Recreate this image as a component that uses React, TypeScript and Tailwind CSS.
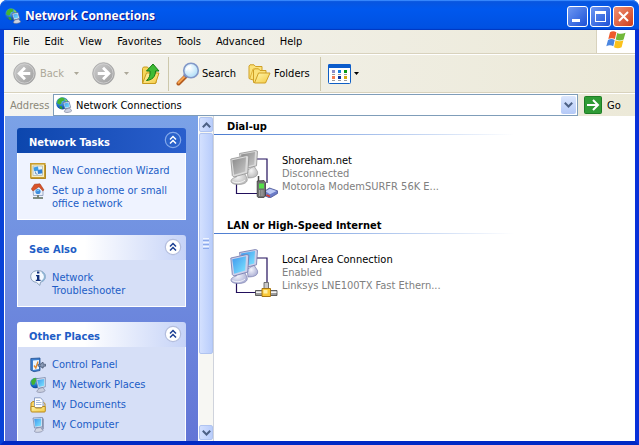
import type { ReactNode } from "react";
import { clsx } from "clsx";

const menuItems = ["File", "Edit", "View", "Favorites", "Tools", "Advanced", "Help"];

/* ---------- icons ---------- */

const GradientDefs = () => (
  <svg aria-hidden="true" className="absolute size-0">
    <defs>
      <linearGradient id="screen" x1="0" x2="1" y1="0" y2="1">
        <stop offset="0" stopColor="#3f97ee" />
        <stop offset="1" stopColor="#7fe6ff" />
      </linearGradient>
      <linearGradient id="screenOff" x1="0" x2="1" y1="0" y2="1">
        <stop offset="0" stopColor="#8a8a8a" />
        <stop offset="1" stopColor="#c8c8c8" />
      </linearGradient>
      <radialGradient cx="0.4" cy="0.3" id="globe" r="0.8">
        <stop offset="0" stopColor="#6fc4f5" />
        <stop offset="0.6" stopColor="#1668c4" />
        <stop offset="1" stopColor="#0b3a86" />
      </radialGradient>
      <linearGradient id="navDisc" x1="0" x2="1" y1="0" y2="1">
        <stop offset="0" stopColor="#cfcfcf" />
        <stop offset="1" stopColor="#9c9c9c" />
      </linearGradient>
      <radialGradient cx="0.4" cy="0.35" id="lens" r="0.7">
        <stop offset="0" stopColor="#ffffff" />
        <stop offset="1" stopColor="#a9dcf8" />
      </radialGradient>
      <linearGradient id="folder" x1="0" x2="1" y1="0" y2="1">
        <stop offset="0" stopColor="#fff7b0" />
        <stop offset="1" stopColor="#f4c93f" />
      </linearGradient>
      <radialGradient cx="0.4" cy="0.4" id="standOff" r="0.7">
        <stop offset="0" stopColor="#f4f4f4" />
        <stop offset="1" stopColor="#b4b4b4" />
      </radialGradient>
      <radialGradient cx="0.4" cy="0.4" id="stand" r="0.7">
        <stop offset="0" stopColor="#f3f4fc" />
        <stop offset="1" stopColor="#a3a7cf" />
      </radialGradient>
    </defs>
  </svg>
);

const NetworkGlobeIcon = () => (
  <svg aria-hidden="true" className="size-4 shrink-0" viewBox="0 0 16 16">
    <circle cx="6.4" cy="6.4" fill="url(#globe)" r="6.200" />
    <path d="M2 2.600 5 .6 8.400 1 8 3.400 5.800 4.400 5 7 3 7.400 1 6Z" fill="#46b52f" />
    <path d="M8.500 1.200 11.600 3.600 11 5 9 4Z" fill="#7ad557" />
    <path d="M3.400 8.800 6 9.400 6.400 12.100 4 11.400Z" fill="#37a12a" />
    <path d="m7 5.600 6-1.200 1.600 6L9 12Z" fill="#e8ecf6" stroke="#5c6c94" strokeWidth=".7" />
    <path d="m8 6.400 4.400-.9 1.100 4.200-4 1Z" fill="url(#screen)" />
    <path d="m9.500 12.200 4-1.200 2.200 2.600c0 1.800-6.600 2.600-7.400 1Z" fill="#cdd2e2" stroke="#69718d" strokeWidth=".6" />
  </svg>
);

const NavIcon = ({ forward = false }: { forward?: boolean }) => (
  <svg aria-hidden="true" className="size-[23px] shrink-0" viewBox="0 0 24 24">
    <circle cx="12" cy="12" fill="url(#navDisc)" r="11.300" stroke="#a3a3a3" strokeWidth=".8" />
    <circle cx="12" cy="12" fill="none" r="10" stroke="#d4d4d4" strokeWidth=".8" />
    <path
      d={forward ? "M6 12h11M11.500 6l6 6-6 6" : "M18 12H7M12.500 6l-6 6 6 6"}
      fill="none"
      stroke="#fff"
      strokeWidth="3"
    />
  </svg>
);

const CaretIcon = ({ className }: { className?: string }) => (
  <svg aria-hidden="true" className={clsx("h-[3px] w-[5px] shrink-0", className)} viewBox="0 0 5 3">
    <path d="M0 0h5L2.500 3Z" fill="currentColor" />
  </svg>
);

const UpFolderIcon = () => (
  <svg aria-hidden="true" className="h-6 w-5 shrink-0" viewBox="0 0 20 24">
    <path d="M1.500 21V6.500l1-1.500h4l1.500 2h7V21Z" fill="#f6d65c" stroke="#c79a1e" />
    <path d="M1.500 21.500 5.500 11H18l-3.500 10.500Z" fill="url(#folder)" stroke="#c79a1e" />
    <path
      d="M12 2 5.500 9H9c.4 4.500-.6 7-3.500 9.500C11 18 14.500 15 14.500 9H18Z"
      fill="#3fbb35"
      stroke="#167a14"
    />
  </svg>
);

const SearchIcon = () => (
  <svg aria-hidden="true" className="size-6 shrink-0" viewBox="0 0 24 24">
    <path d="m2.500 21.500 8-8" stroke="#b25a1c" strokeLinecap="round" strokeWidth="4" />
    <path d="m2.500 20.800 7.500-7.500" stroke="#f7a552" strokeLinecap="round" strokeWidth="2" />
    <path d="m8.500 14.500 2-2" stroke="#6d7eb0" strokeWidth="4" />
    <circle cx="15" cy="8.500" fill="url(#lens)" r="7.300" stroke="#8298c8" strokeWidth="1.600" />
    <path d="M10.500 8.500c.3-2.500 2-4 4.500-4.200" fill="none" stroke="#fff" strokeWidth="1.500" />
  </svg>
);

const FoldersIcon = () => (
  <svg aria-hidden="true" className="h-5 w-[23px] shrink-0" viewBox="0 0 23 20">
    <path d="M1 14.500V2L2 .8h4L7.500 2.500H14V6L5 16Z" fill="#fbe27a" stroke="#cf9f24" />
    <path d="M5.500 18.500V6l1-1.200h4L12 6.500h6V9L8 18.500Z" fill="#fbe27a" stroke="#cf9f24" />
    <path d="M2 14 5 5h2" fill="none" stroke="#e1b53c" />
    <path d="m6.500 19 4-10H22l-4.500 10Z" fill="url(#folder)" stroke="#cf9f24" />
  </svg>
);

const ViewsIcon = () => (
  <svg aria-hidden="true" className="h-5 w-[23px] shrink-0" viewBox="0 0 23 20">
    <rect fill="#fff" height="19" rx="1" stroke="#0f5fc4" width="22" x=".5" y=".5" />
    <path d="M0 1.500Q0 0 1.500 0h20Q23 0 23 1.500V4H0Z" fill="#0b5ccb" />
    <path d="M4 6h3v3H4Z" fill="#8f8fc9" />
    <path d="M10 6h3v3h-3Z" fill="#1a7fe0" />
    <path d="M16 6h3v3h-3Z" fill="#0a9a18" />
    <path d="M4 12h3v3H4Z" fill="#f57c50" />
    <path d="M10 12h3v3h-3Z" fill="#12349a" />
    <path d="M16 12h3v3h-3Z" fill="#d3a80e" />
    <path d="M4 10.500h3m3 0h3m3 0h3M4 16.500h3m3 0h3m3 0h3" stroke="#9a9a9a" />
  </svg>
);

const WindowsFlagIcon = () => (
  <svg aria-hidden="true" className="h-[18px] w-5" viewBox="0 0 20 18">
    <path d="M4 1.300C6 0 8.200 0 10.400 1.300L8.900 8C6.900 6.900 4.700 6.900 2.300 8Z" fill="#ee5a2b" />
    <path d="M11.200 1.900c2.400 1.300 5 1.300 8.300-.2L17.600 8.400c-2.400 1.300-5.200 1.300-7.900 0Z" fill="#72b83a" />
    <path d="M2 8.900c2.300-1.200 4.500-1.200 6.700 0L7.300 15.200c-2.100-1.200-4.600-1.200-7 0Z" fill="#4a86e0" />
    <path d="M9.500 9.300c2.600 1.300 5.300 1.300 7.900 0l-1.800 6.900c-2.500 1.300-5 1.300-7.600 0Z" fill="#fbc11c" />
  </svg>
);

const ChevronIcon = ({ up = false }: { up?: boolean }) => (
  <svg aria-hidden="true" className="h-[6px] w-[9px]" viewBox="0 0 9 6">
    <path d={up ? "M.8 5.200 4.500 1.500l3.700 3.700" : "M.8.8l3.700 3.700L8.200.8"} fill="none" stroke="#4d6185" strokeWidth="2" />
  </svg>
);

const CollapseIcon = ({ primary = false }: { primary?: boolean }) => (
  <svg aria-hidden="true" className="size-[18px]" viewBox="0 0 18 18">
    <circle
      cx="9"
      cy="9"
      fill={primary ? "#2a62cb" : "#fff"}
      r="7.700"
      stroke={primary ? "#83a8ea" : "#b4bede"}
      strokeWidth="1.200"
    />
    <path
      d="M6 8.500l3-3 3 3M6 12.500l3-3 3 3"
      fill="none"
      stroke={primary ? "#fff" : "#1c3f94"}
      strokeWidth="1.500"
    />
  </svg>
);

const WizardIcon = () => (
  <svg aria-hidden="true" className="size-4" viewBox="0 0 16 16">
    <path d="M1 15.500h14.500V2" fill="none" stroke="#8a6a1d" />
    <rect fill="#f6efc9" height="14" stroke="#c99d2e" strokeWidth="1.600" width="14" x=".8" y=".8" />
    <rect fill="#e3f1fb" height="9.500" stroke="#a6a58f" strokeWidth=".6" width="9.500" x="3" y="3" />
    <path d="m3.500 4.500 4.500-.9.600 3.900-4.400.8Z" fill="#3c9be6" />
    <path d="m7.500 7 4.500-.7.400 4-4.300.7Z" fill="#2f7fd6" />
    <path d="M5.500 8.500v2l2 .8" fill="none" stroke="#7894ba" />
  </svg>
);

const HomeNetworkIcon = () => (
  <svg aria-hidden="true" className="size-4" viewBox="0 0 16 16">
    <path d="M3 6.500 8.500 3 13 7v5.500H3.500Z" fill="#e9effa" stroke="#7d8dae" strokeWidth=".7" />
    <path d="M1.300 6 4.500 1.200 10 .8 14 7l-1.300.8L9 3.800 3 8Z" fill="#d9532a" stroke="#9c3517" strokeWidth=".5" />
    <circle cx="8" cy="8.500" fill="#3c8de0" r="2.600" />
    <path d="M6.500 8c1-.8 1.500-.3 2.500-1" stroke="#9de3ff" />
    <path d="M8 12v2.500" stroke="#7a8478" strokeWidth="2" />
    <path d="M3 15h10" stroke="#5b6b5a" strokeWidth="1.400" />
  </svg>
);

const InfoIcon = () => (
  <svg aria-hidden="true" className="size-4" viewBox="0 0 16 16">
    <path
      d="M8 .6c4.500 0 7.300 2.600 7.300 6 0 3-2 5-4.800 5.600L9.800 15.400 6.500 12.400C3 12 .7 9.800.7 6.600.7 3.200 3.500.6 8 .6Z"
      fill="#f4f9ff"
      stroke="#8aa0bb"
    />
    <path d="M12 2c4 2.500 3.500 7.500-.5 9.500" fill="none" stroke="#8fb4d4" strokeWidth="1.600" />
    <path d="M7 1.500h2.400v2H7ZM6 5h3.400v4.800h1.200V11H5.800V9.800H7V6.200H6Z" fill="#12307c" />
  </svg>
);

const ControlPanelIcon = () => (
  <svg aria-hidden="true" className="size-4" viewBox="0 0 16 16">
    <path d="M.8 1.500 10 1v12.500l-6 1.200-3.200-1.500Z" fill="#3d7fd0" stroke="#24508f" strokeWidth=".8" />
    <path d="M3 3.500 9 3v9l-6 1Z" fill="#e9f5ff" />
    <path d="m4 8.500 1.800 2.500L8 4.500" fill="none" stroke="#e28a2c" strokeWidth="1.300" />
    <path d="M8 7.200h3l1-1.700h1.200v1.700h2.300v2h-2.300V11H12l-1-1.800H8Z" fill="#8b9cb8" stroke="#3d4c69" strokeWidth=".7" />
  </svg>
);

const NetworkPlacesIcon = () => (
  <svg aria-hidden="true" className="size-4" viewBox="0 0 16 16">
    <circle cx="5.500" cy="6" fill="url(#globe)" r="5.300" />
    <path d="M1 4 4 1l3.500.3L6 4 4.500 7.500 2 8Z" fill="#41b333" />
    <path d="m6 1.800 9.300-1.300v9.300L8 11.500Z" fill="#dce2f0" stroke="#6c7da4" strokeWidth=".7" />
    <path d="m7.200 2.900 7-1v6.900L8.800 10Z" fill="url(#screen)" />
    <path d="M9 11.500 13 10.500l2 3c0 1.800-7 2.800-8.300.9Z" fill="#c9cede" stroke="#737b97" strokeWidth=".6" />
  </svg>
);

const DocumentsIcon = () => (
  <svg aria-hidden="true" className="size-4" viewBox="0 0 16 16">
    <path d="M1 13.500V6L3 4.500h3" fill="#f8d563" stroke="#b98a1c" />
    <path d="M4.500 10.500V.8h6L13 3.500v7Z" fill="#fff" stroke="#7389b5" strokeWidth=".8" />
    <path d="M6 3.500h4M6 5.500h5.500M6 7.500h5.500" stroke="#8fa9d6" strokeWidth=".8" />
    <path d="M1 9.500h3.500l1 1.500h6l1-1.500h2.800V14q0 1-1 1H2q-1 0-1-1Z" fill="url(#folder)" stroke="#b98a1c" />
    <path d="M15 9.500V6.500l-1.500-1" fill="none" stroke="#b98a1c" />
  </svg>
);

const ComputerIcon = () => (
  <svg aria-hidden="true" className="size-4" viewBox="0 0 16 16">
    <path d="M11.500 1.500H14v10.500l-2.500 1.500Z" fill="#98a2bd" />
    <path d="M3 1 12.500.4v9.400L4.500 11Z" fill="#dce2f0" stroke="#6c7da4" strokeWidth=".7" />
    <path d="m4.200 2.100 7-.5v7.200l-6 .9Z" fill="url(#screen)" />
    <path d="m6 11.200 4.500-.7 2.500 3c-.8 1.900-7.500 2.500-8.500 1Z" fill="#d3d7e4" stroke="#737b97" strokeWidth=".6" />
  </svg>
);

const Monitors = ({ off = false }: { off?: boolean }) => {
  const shell = off ? "#dadada" : "#cdd0ea";
  const edge = off ? "#8f8f8f" : "#6f74a8";
  const screen = off ? "url(#screenOff)" : "url(#screen)";
  const stand = off ? "url(#standOff)" : "url(#stand)";

  return (
    <>
      <path d="M26 9h11v24M6.500 33v10.500H27" fill="none" stroke="#22105c" strokeWidth="1.200" />
      <path d="M17 20.500 24 16l3.500 5.500c1 4-2 6.500-9.500 6.500Z" fill={stand} stroke={edge} strokeWidth=".6" />
      <path d="m9.500 3.500 16-3 2 .8-1 14.500L12 19.500Z" fill={shell} stroke={edge} strokeWidth=".8" />
      <path d="m11 4.600 14-2.500-.8 12.400L13 17.500Z" fill={screen} />
      <path d="M6.500 24 14 22l3 6c1.500 4-2.500 6.500-8.500 6.500-5 0-8-1.500-7.500-4 .5-2 3.500-3 5.500-3.500Z" fill={stand} stroke={edge} strokeWidth=".6" />
      <path d="M2.500 31.500c3.500 2 9.500 1.500 12.500-1.500" fill="none" stroke="#fff" strokeWidth=".8" />
      <path d="m.8 9 16-3.500 2 .8-1 16.700L3.800 27l-1.500-1.500Z" fill={shell} stroke={edge} strokeWidth=".8" />
      <path d="M2.300 10.200 16 7.200l-.8 14.300L4.200 24.800Z" fill={screen} />
    </>
  );
};

const DialUpIcon = () => (
  <svg aria-hidden="true" className="size-12 shrink-0" viewBox="0 0 48 48">
    <Monitors off />
    <path d="m34 41.500 5.500-3.500 8 2.800v2.700L40 48l-6-2.500Z" fill="#6b7cc8" stroke="#3d4789" strokeWidth=".7" />
    <path d="m35.500 41.300 4.300-2.500 6.700 2.300-6.500 3.200Z" fill="#bcc9f4" />
    <path d="m36.500 45 3.500 1.500" stroke="#dd3b28" strokeWidth="1.600" />
    <path d="M28.500 26v6" stroke="#4b4b4b" strokeWidth="1.500" />
    <path d="M27.200 31 34 30.500l1.500 2v13.500L33 48h-4l-1.800-1.500Z" fill="#707070" stroke="#3b3b3b" strokeWidth=".8" />
    <path d="M29 33.500h5v5h-5Z" fill="#55e04a" />
    <path d="M29 41h5m-5 2h5m-5 2h5" stroke="#d2d2d2" strokeDasharray="1 .7" />
  </svg>
);

const LanIcon = () => (
  <svg aria-hidden="true" className="size-12 shrink-0" viewBox="0 0 48 48">
    <Monitors />
    <path d="M34 33.500h4.500v8H34Z" fill="#c8c8c8" stroke="#555" strokeWidth=".8" />
    <path d="M25.500 41.500h21.500v5H25.500Z" fill="#9c9c9c" stroke="#444" strokeWidth=".8" />
    <path d="M26 43.200h20.500" stroke="#f4f4f4" strokeWidth="1.600" />
    <path d="M32 39.500h8.500v8H32Z" fill="#f9c93a" stroke="#a87712" />
    <path d="M33.500 41h4v3.500h-4Z" fill="#fff0a8" />
  </svg>
);

/* ---------- window chrome ---------- */

const captionButton =
  "flex size-[21px] items-center justify-center rounded-[3px] border border-white bg-linear-to-br";

const TitleBar = () => (
  <header className="flex h-[30px] shrink-0 items-center gap-1 rounded-t-[7px] bg-linear-to-b from-[#0a55dc] via-[#0058ee] via-30% to-[#0050e0] pt-[2px] pr-[5px] pl-[5px] shadow-[inset_0_2px_1px_-1px_#3b8cff,inset_0_-2px_1px_-1px_#0037c0]">
    <NetworkGlobeIcon />
    <h1 className="flex-1 truncate font-['Open_Sans','Noto_Sans',sans-serif] text-xs font-bold text-white [text-shadow:1px_1px_#0f1089]">
      Network Connections
    </h1>
    <div className="flex gap-[2px]">
      <button aria-label="Minimize" className={clsx(captionButton, "from-[#6e97f2] to-[#1d4fd6]")} type="button">
        <span className="mt-2 mr-1 h-[3px] w-2 bg-white" />
      </button>
      <button aria-label="Maximize" className={clsx(captionButton, "from-[#6e97f2] to-[#1d4fd6]")} type="button">
        <span className="size-[11px] border border-t-[3px] border-white" />
      </button>
      <button aria-label="Close" className={clsx(captionButton, "from-[#ee8f72] to-[#cf3a12]")} type="button">
        <svg aria-hidden="true" className="size-[11px]" viewBox="0 0 11 11">
          <path d="m1 1 9 9m0-9-9 9" stroke="#fff" strokeWidth="2" />
        </svg>
      </button>
    </div>
  </header>
);

const MenuBar = () => (
  <div className="flex h-6 shrink-0 border-b border-[#d8d2bd]">
    <nav aria-label="Menu" className="flex flex-1 items-center gap-px pl-[2px]">
      {menuItems.map((item) => (
        <button key={item} className="px-[7px]" type="button">
          {item}
        </button>
      ))}
    </nav>
    <div className="flex w-[39px] items-center justify-center border-l border-[#d8d2bd] bg-white pb-1">
      <WindowsFlagIcon />
    </div>
  </div>
);

const Separator = () => <span className="h-[34px] w-px shrink-0 bg-[#cdc8ac]" />;

const Toolbar = () => (
  <div className="flex h-[39px] shrink-0 items-center border-t border-b border-t-white border-b-[#d8d2bd] pl-[9px]">
    <button className="flex items-center gap-1 text-[#aca899]" disabled type="button">
      <NavIcon />
      Back
      <CaretIcon className="ml-[6px]" />
    </button>
    <button aria-label="Forward" className="ml-[13px] flex items-center gap-[9px] text-[#aca899]" disabled type="button">
      <NavIcon forward />
      <CaretIcon />
    </button>
    <button aria-label="Up" className="mr-[7px] ml-3" type="button">
      <UpFolderIcon />
    </button>
    <Separator />
    <button className="ml-[7px] flex items-center gap-[2px]" type="button">
      <SearchIcon />
      Search
    </button>
    <button className="mr-[10px] ml-3 flex items-center gap-[3px]" type="button">
      <FoldersIcon />
      Folders
    </button>
    <Separator />
    <button aria-label="Views" className="ml-[7px] flex items-center gap-[3px]" type="button">
      <ViewsIcon />
      <CaretIcon />
    </button>
  </div>
);

const AddressBar = () => (
  <form className="flex h-[23px] shrink-0 items-center border-t border-t-white pl-[6px]" onSubmit={(event) => event.preventDefault()}>
    <label className="w-[43px] text-[#8a8778]" htmlFor="address">
      Address
    </label>
    <div className="flex h-[22px] flex-1 items-center border border-[#7f9db9] bg-white pr-px pl-[2px]">
      <NetworkGlobeIcon />
      <input
        className="ml-1 min-w-0 flex-1 bg-transparent outline-none"
        defaultValue="Network Connections"
        id="address"
        type="text"
      />
      <button
        aria-label="Show addresses"
        className="flex h-[18px] w-[15px] items-center justify-center rounded-[2px] bg-linear-to-b from-[#dce7fd] to-[#b4c9f7]"
        type="button"
      >
        <ChevronIcon />
      </button>
    </div>
    <button className="ml-[6px] flex w-[51px] items-center gap-[5px]" type="submit">
      <svg aria-hidden="true" className="size-[18px]" viewBox="0 0 18 18">
        <rect fill="#2f9b35" height="17" rx="1" stroke="#1d7d25" width="17" x=".5" y=".5" />
        <path d="M3 9h11M9 4l5 5-5 5" fill="none" stroke="#fff" strokeWidth="2" />
      </svg>
      Go
    </button>
  </form>
);

/* ---------- task pane ---------- */

type TaskLink = { label: string; icon: ReactNode };

const networkTasks: TaskLink[] = [
  { label: "New Connection Wizard", icon: <WizardIcon /> },
  { label: "Set up a home or small\noffice network", icon: <HomeNetworkIcon /> },
];

const seeAlso: TaskLink[] = [{ label: "Network\nTroubleshooter", icon: <InfoIcon /> }];

const otherPlaces: TaskLink[] = [
  { label: "Control Panel", icon: <ControlPanelIcon /> },
  { label: "My Network Places", icon: <NetworkPlacesIcon /> },
  { label: "My Documents", icon: <DocumentsIcon /> },
  { label: "My Computer", icon: <ComputerIcon /> },
];

const TaskPanel = ({ title, links, primary = false }: { title: string; links: TaskLink[]; primary?: boolean }) => (
  <section className="shrink-0">
    <h2
      className={clsx(
        "flex h-[25px] items-center justify-between rounded-t-[3px] bg-linear-to-r pr-1 pl-3 font-bold",
        primary ? "from-[#0c46ad] to-[#2a5fcd] text-white" : "from-white from-40% to-[#c6d3f7] text-[#215dc6]",
      )}
    >
      <span className="pt-1">{title}</span>
      <button aria-label={`Collapse ${title}`} className="pb-[2px]" type="button">
        <CollapseIcon primary={primary} />
      </button>
    </h2>
    <ul
      className={clsx(
        "flex flex-col gap-1 border border-t-0 border-white px-3 pt-[10px] pb-[9px]",
        primary ? "bg-[#eff3ff]" : "bg-[#d6dff7]",
      )}
    >
      {links.map(({ label, icon }) => (
        <li key={label}>
          <a className="flex min-h-4 gap-[6px] text-[#215dc6] hover:underline" href="#">
            <span className="size-4 shrink-0">{icon}</span>
            <span className="pt-px whitespace-pre-line">{label}</span>
          </a>
        </li>
      ))}
    </ul>
  </section>
);

const scrollPart =
  "flex w-full shrink-0 items-center justify-center rounded-[2px] border border-[#b0c4f0] bg-linear-to-r from-[#d3e0fe] to-[#b9cdfb]";

const ScrollBar = () => (
  <div aria-hidden="true" className="flex w-4 shrink-0 flex-col gap-px border-x border-white border-r-[#cfd3dc] bg-[#f7f7f3] py-px">
    <div className={clsx(scrollPart, "h-[15px]")}>
      <ChevronIcon up />
    </div>
    <div className={clsx(scrollPart, "h-[221px] flex-col gap-px")}>
      <span className="h-px w-[6px] bg-[#eef4fe]" />
      <span className="h-px w-[6px] bg-[#8caaeb]" />
      <span className="h-px w-[6px] bg-[#eef4fe]" />
      <span className="h-px w-[6px] bg-[#8caaeb]" />
      <span className="h-px w-[6px] bg-[#eef4fe]" />
      <span className="h-px w-[6px] bg-[#8caaeb]" />
    </div>
    <div className={clsx(scrollPart, "mt-auto h-[15px]")}>
      <ChevronIcon />
    </div>
  </div>
);

/* ---------- connection list ---------- */

const ConnectionGroup = ({
  title,
  name,
  status,
  device,
  icon,
}: {
  title: string;
  name: string;
  status: string;
  device: string;
  icon: ReactNode;
}) => (
  <section>
    <h2 className="h-[18px] pt-1 pl-[13px] font-bold">{title}</h2>
    <div className="h-px w-[300px] max-w-full bg-linear-to-r from-[#4a7bd0] to-white" />
    <div className="flex gap-1 pt-[15px] pb-[17px] pl-4">
      {icon}
      <div className="pt-1 text-[#808080]">
        <h3 className="text-black">{name}</h3>
        <p>{status}</p>
        <p>{device}</p>
      </div>
    </div>
  </section>
);

export default function App() {
  return (
    <div className="flex h-screen flex-col overflow-hidden rounded-t-[7px] bg-[#0842d8] font-['DejaVu_Sans_Condensed','DejaVu_Sans',sans-serif] text-[11px] leading-[13px] text-black">
      <GradientDefs />
      <TitleBar />
      <div className="flex min-h-0 flex-1 flex-col border-x-4 border-b-4 border-[#0842d8] border-r-[#0831d9] border-b-[#0029c4]">
        <div className="flex shrink-0 flex-col bg-linear-to-r from-[#f4f4f0] to-[#ece9d8]">
          <MenuBar />
          <Toolbar />
          <AddressBar />
        </div>
        <div className="flex min-h-0 flex-1 border-l border-white">
          <aside className="flex w-[193px] shrink-0 flex-col gap-[15px] overflow-hidden bg-linear-to-b from-[#7ba2e7] to-[#6375d6] px-3 pt-3">
            <TaskPanel links={networkTasks} primary title="Network Tasks" />
            <TaskPanel links={seeAlso} title="See Also" />
            <TaskPanel links={otherPlaces} title="Other Places" />
          </aside>
          <ScrollBar />
          <main className="min-w-0 flex-1 overflow-hidden bg-white">
            <ConnectionGroup
              device="Motorola ModemSURFR 56K E..."
              icon={<DialUpIcon />}
              name="Shoreham.net"
              status="Disconnected"
              title="Dial-up"
            />
            <ConnectionGroup
              device="Linksys LNE100TX Fast Ethern..."
              icon={<LanIcon />}
              name="Local Area Connection"
              status="Enabled"
              title="LAN or High-Speed Internet"
            />
          </main>
        </div>
      </div>
    </div>
  );
}
